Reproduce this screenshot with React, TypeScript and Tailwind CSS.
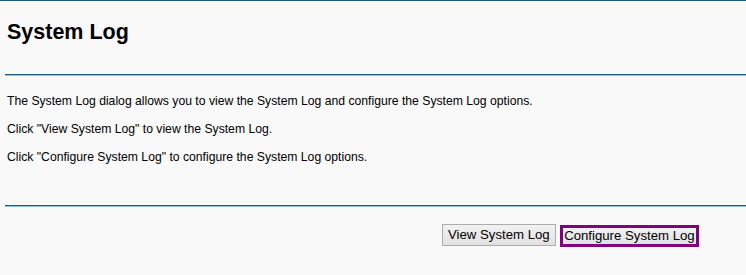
export default function App() {
  return (
    <div className="h-[275px] w-[746px] border-t border-[#1f5a73] bg-[#f9f9f9] font-['Liberation_Sans',Arial,sans-serif] text-black">
      <h1 className="px-[7px] pt-[18px] text-[21.5px] font-bold leading-[26px]">System Log</h1>
      <div className="ml-[5px] mt-[29px] border-t border-b border-t-[#1b5c86] border-b-[#8fc3dd]" />
      <div className="flex flex-col gap-[16px] px-[7px] pt-[19px] text-[12.2px] leading-[12px]">
        <p>The System Log dialog allows you to view the System Log and configure the System Log options.</p>
        <p>Click "View System Log" to view the System Log.</p>
        <p>Click "Configure System Log" to configure the System Log options.</p>
      </div>
      <div className="ml-[5px] mt-[42px] border-t border-b border-t-[#1b5c86] border-b-[#8fc3dd]" />
      <div className="flex items-start gap-[4px] pl-[442px] pt-[17px]">
        <button className="h-[22px] border border-[#adadad] bg-gradient-to-b from-[#f2f2f2] to-[#e1e1e1] px-[5px] text-[13.2px] leading-[20px]">
          View System Log
        </button>
        <button className="mt-[1px] h-[22px] border-[3px] border-[#800080] bg-gradient-to-b from-[#f2f2f2] to-[#e1e1e1] px-[1.5px] text-[13.2px] leading-[16px]">
          Configure System Log
        </button>
      </div>
    </div>
  );
}
